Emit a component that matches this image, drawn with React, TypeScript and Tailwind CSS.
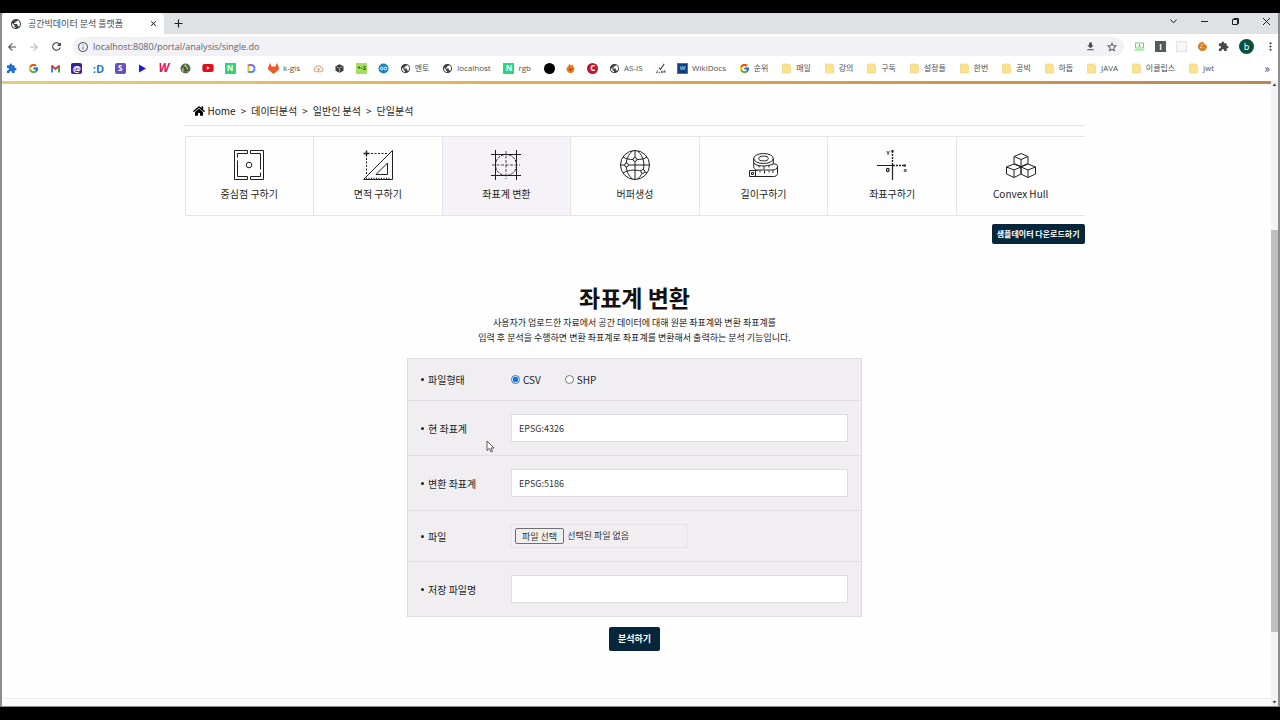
import { useRef, useState } from "react";
import type { ReactNode } from "react";
import { clsx } from "clsx";
import { FcGoogle } from "react-icons/fc";
import { SiGitlab } from "react-icons/si";
import { FaHome, FaYoutube } from "react-icons/fa";
import {
  MdArrowBack,
  MdArrowForward,
  MdClose,
  MdCookie,
  MdExtension,
  MdFileDownload,
  MdInfoOutline,
  MdMoreVert,
  MdPublic,
  MdRefresh,
  MdStarBorder,
} from "react-icons/md";

/* ---------- bookmark icons ---------- */

function Tile({ className, children }: { className: string; children?: ReactNode }) {
  return (
    <span className={clsx("flex size-[11px] items-center justify-center leading-none font-bold", className)}>
      {children}
    </span>
  );
}

function Folder() {
  return (
    <svg viewBox="0 0 11 11" className="size-[11px]">
      <path d="M1.500 1h7v1.500h1V10h-8z" fill="#fbe38e" stroke="#ead07a" strokeWidth="0.600" />
    </svg>
  );
}

function GmailMark() {
  return (
    <svg viewBox="0 0 11 11" className="size-[11px]" fill="none" strokeWidth="2">
      <path d="M2 9.500V3" stroke="#4285f4" />
      <path d="M9 9.500V3" stroke="#34a853" />
      <path d="M1.500 2.500l4 3.500 4-3.500" stroke="#d93a2f" />
    </svg>
  );
}

function PlayMark() {
  return (
    <svg viewBox="0 0 11 11" className="size-[11px]">
      <path d="M2 1.500 9 5.500 2 9.500z" fill="#1d1ad1" />
    </svg>
  );
}

function LeafGlobe() {
  return (
    <svg viewBox="0 0 12 12" className="size-[11px]">
      <circle cx="6" cy="6" r="5.500" fill="#5b6a55" />
      <path d="M3 9.500C3 5 5 3 6 2.500c1 2 2 4 3 7" fill="none" stroke="#a8cf6b" strokeWidth="1.400" />
      <path d="M2 4.500c2-1 3 0 4 2s2 2 4 1" fill="none" stroke="#384636" strokeWidth="1.200" />
    </svg>
  );
}

function DMark() {
  return (
    <svg viewBox="0 0 11 11" className="size-[11px]" fill="none" strokeWidth="2">
      <path d="M2.500 1v9" stroke="#f2b632" />
      <path d="M2.500 2H5q3.500 0 3.500 3.500" stroke="#7b6cf0" />
      <path d="M8.500 5.500Q8.500 9 5 9H2.500" stroke="#4a8df0" />
    </svg>
  );
}

function CloudMark() {
  return (
    <svg viewBox="0 0 12 12" className="size-[11px]" fill="none" stroke="#e0a27c" strokeWidth="1.100">
      <path d="M3 9.500a2.300 2.300 0 0 1 0-4.500 3.200 3.200 0 0 1 6 0 2.300 2.300 0 0 1 0 4.500z" />
      <path d="M6 9V6M4.700 7.200 6 6l1.300 1.200" />
    </svg>
  );
}

function CubeMark() {
  return (
    <svg viewBox="0 0 11 11" className="size-[11px]">
      <path d="M5.500 1.200 9.500 3.200v4.600l-4 2-4-2V3.200z" fill="#3d3d3d" />
      <path d="M2.500 3.800 5.500 5.200l3-1.400M5.500 5.200v3.600" stroke="#b5b5b5" strokeWidth="0.800" fill="none" />
    </svg>
  );
}

function LinkMark() {
  return (
    <svg viewBox="0 0 12 12" className="size-[11px]">
      <circle cx="6" cy="6" r="5.500" fill="#1b84b8" />
      <circle cx="4" cy="6" r="1.500" fill="none" stroke="#fff" />
      <circle cx="8" cy="6" r="1.500" fill="none" stroke="#fff" />
    </svg>
  );
}

function FlameMark() {
  return (
    <svg viewBox="0 0 11 11" className="size-[11px]">
      <path d="M1.500 5 3.500 3 4 .800 6 2.500 8 1.500v2l1.500 1.500c0 3-1.500 5-4 5s-4-2-4-5z" fill="#e8761d" />
      <circle cx="5.500" cy="6.500" r="1.300" fill="#a84a10" />
    </svg>
  );
}

function JsonMark() {
  return (
    <svg viewBox="0 0 12 12" className="size-[11px]" fill="none" stroke="#444">
      <path d="M4.500 5 6 7l4-6" strokeWidth="1.200" />
      <path d="M1 10.500h1.500V8M4 10.500h1.500M7 8.500v2h1.500v-2M10 10.500v-2h1v2" strokeWidth="0.900" />
    </svg>
  );
}

interface Bookmark {
  name: string;
  icon: ReactNode;
  text?: string;
}

const globe = <MdPublic className="size-[11px] text-[#3f4347]" />;
const google = <FcGoogle className="size-[11px]" />;

const bookmarks: Bookmark[] = [
  { name: "extensions", icon: <MdExtension className="size-[11px] text-[#1f6fd1]" /> },
  { name: "google", icon: google },
  { name: "gmail", icon: <GmailMark /> },
  { name: "mail", icon: <Tile className="rounded-xs bg-[#32229c] text-[9px] text-white">@</Tile> },
  { name: "d", icon: <Tile className="text-[11px] text-[#2376cf]">:D</Tile> },
  { name: "s", icon: <Tile className="rounded-xs bg-[#6a51b5] text-[8px] text-white">S</Tile> },
  { name: "play", icon: <PlayMark /> },
  { name: "w", icon: <Tile className="text-[12px] text-[#dd1462] italic">W</Tile> },
  { name: "leaf", icon: <LeafGlobe /> },
  { name: "youtube", icon: <FaYoutube className="size-[12px] text-[#e00d1c]" /> },
  { name: "n", icon: <Tile className="bg-[#2bd67b] text-[8px] text-white">N</Tile> },
  { name: "docs", icon: <DMark /> },
  { name: "k-gis", icon: <SiGitlab className="size-[11px] text-[#ea5a2a]" />, text: "k-gis" },
  { name: "cloud", icon: <CloudMark /> },
  { name: "cube", icon: <CubeMark /> },
  { name: "js", icon: <Tile className="bg-[#a3e05f] text-[6px] text-[#2d5a1c]">*-S</Tile> },
  { name: "link", icon: <LinkMark /> },
  { name: "mentor", icon: globe, text: "멘토" },
  { name: "localhost", icon: globe, text: "localhost" },
  { name: "rgb", icon: <Tile className="bg-[#2bd67b] text-[8px] text-white">N</Tile>, text: "rgb" },
  { name: "dot", icon: <Tile className="rounded-full bg-black" /> },
  { name: "flame", icon: <FlameMark /> },
  { name: "c", icon: <Tile className="rounded-full bg-[#c4142d] text-[8px] text-white">C</Tile> },
  { name: "as-is", icon: globe, text: "AS-IS" },
  { name: "json", icon: <JsonMark /> },
  {
    name: "wikidocs",
    icon: <Tile className="border border-[#2a7ac4] bg-[#123f78] text-[6px] text-[#8fc4f2]">W</Tile>,
    text: "WikiDocs",
  },
  { name: "rank", icon: google, text: "순위" },
  { name: "daily", icon: <Folder />, text: "매일" },
  { name: "lecture", icon: <Folder />, text: "강의" },
  { name: "subscribe", icon: <Folder />, text: "구독" },
  { name: "settings", icon: <Folder />, text: "설정들" },
  { name: "once", icon: <Folder />, text: "한번" },
  { name: "gongbig", icon: <Folder />, text: "공빅" },
  { name: "hadoop", icon: <Folder />, text: "하둡" },
  { name: "java", icon: <Folder />, text: "JAVA" },
  { name: "eclipse", icon: <Folder />, text: "이클립스" },
  { name: "jwt", icon: <Folder />, text: "jwt" },
];

/* ---------- analysis icons ---------- */

function CenterIcon() {
  return (
    <>
      <path d="M13.500 0.500v3h-10v4M13.500 0.500h-13v29h13v-3h-10v-16" />
      <path d="M16.500 3.500v-3h13v29h-13v-3h10v-4M16.500 3.500h10v16" />
      <circle cx="15" cy="15" r="2.800" />
    </>
  );
}

function AreaIcon() {
  return (
    <>
      <path d="M29.500 0.500v29h-29z" />
      <path d="M24.500 13v11.500H13z" />
      <path d="M0.500 3.500h6M3.500 0.500v6" strokeWidth="1.400" />
      <path d="M8 3.500h17M3.500 8v17" strokeDasharray="2 1.500" />
      <path d="M3 28.500h25" strokeDasharray="1 1.500" strokeWidth="1.500" />
    </>
  );
}

function TransformIcon() {
  return (
    <>
      <path d="M4.500 0v30M25.500 0v30M0 4.500h30M0 25.500h30" />
      <circle cx="15" cy="15" r="10.500" strokeDasharray="3 1" />
      <path d="M15 1v28M1 15h28" strokeDasharray="3 1.500" strokeWidth="0.800" />
    </>
  );
}

function BufferIcon() {
  return (
    <>
      <circle cx="15" cy="15" r="14.500" />
      <path d="M15 0.500v7M15 11.500v18M0.500 15H4.500M8.500 15h21" />
      <path d="M12.500 0.800C4 8 4 22 12.500 29.200M17.500 0.800C26 8 26 22 17.500 29.200" />
      <path d="M3 7c3 2 6.500 2.500 10 2.500M17 9.500c4 0 7-.5 10-2.500M3 23c7-4 13-3 18.500-2M25 22l2 1" />
      <g fill="#fff">
        <circle cx="15" cy="9.500" r="1.900" />
        <circle cx="6.500" cy="15" r="1.900" />
        <circle cx="22.800" cy="21.500" r="1.900" />
      </g>
    </>
  );
}

function LengthIcon() {
  return (
    <>
      <ellipse cx="14.500" cy="8.500" rx="9.800" ry="5" />
      <ellipse cx="14.500" cy="8.500" rx="4.800" ry="2.400" />
      <path d="M4.700 8.500v8c0 1.500 1 3 3 3.500h15c3 0 5.800-1 5.800-3.500 0-2-2-3-4.200-2.500V8.500" />
      <path d="M4.700 13c3 3.500 12 4 19.600 1M28.500 16.500v7c0 2-2 3-4 3h-24v-6h8" />
      <path d="M10 15.500v2M15 16v3M20 15.500v2M11 20.500v2M15.500 20.500v3M20 20.500v2M24 20v3M6.500 20.500v6M2.500 22.500h2v2h-2z" />
    </>
  );
}

function PointIcon() {
  return (
    <>
      <path d="M0 15.500h15M15.500 15v15" strokeWidth="1.200" />
      <path d="M15.500 1v14M16 15.500h12" strokeDasharray="2 1" strokeWidth="1.400" />
      <path d="M14.500 1h2M28 14.500v2" strokeWidth="2" />
      <g fill="#111" stroke="none" fontSize="6" fontWeight="700" fontFamily="Liberation Sans, sans-serif">
        <text x="9" y="4.500">Y</text>
        <text x="26.500" y="22">x</text>
      </g>
      <ellipse cx="10.800" cy="20" rx="1.300" ry="1.600" strokeWidth="1.200" />
    </>
  );
}

function HullIcon() {
  return (
    <>
      <path d="M15 3.500 22 6.500v7l-7 3-7-3v-7zM8 6.500l7 3 7-3M15 9.500v7" />
      <path d="M8 14 15 17v7l-7 3.500L0.500 24v-7zM0.500 17 8 20l7-3M8 20v7.500" />
      <path d="M22 14l7.500 3v7L22 27.500 15 24v-7zM15 17l7 3 7.500-3M22 20v7.500" />
    </>
  );
}

const tools = [
  { label: "중심점 구하기", Icon: CenterIcon },
  { label: "면적 구하기", Icon: AreaIcon },
  { label: "좌표계 변환", Icon: TransformIcon, active: true },
  { label: "버퍼생성", Icon: BufferIcon },
  { label: "길이구하기", Icon: LengthIcon },
  { label: "좌표구하기", Icon: PointIcon },
  { label: "Convex Hull", Icon: HullIcon },
];

/* ---------- browser chrome ---------- */

function TabStrip() {
  return (
    <div className="flex h-[21px] items-stretch bg-[#dfe1e5]">
      <div className="flex w-[162px] items-center rounded-t bg-white pr-1.5 pl-2">
        <MdPublic className="size-3 shrink-0 text-[#3f4347]" />
        <span className="ml-1.5 flex-1 text-[9px] whitespace-nowrap text-[#45494d]">공간빅데이터 분석 플랫폼</span>
        <button type="button" aria-label="탭 닫기">
          <MdClose className="size-[9px] text-[#202124]" />
        </button>
      </div>
      <button type="button" aria-label="새 탭" className="ml-2.5">
        <svg viewBox="0 0 9 9" className="size-[9px]" stroke="#202124" strokeWidth="1.200">
          <path d="M4.500 0.500v8M0.500 4.500h8" />
        </svg>
      </button>
      <div className="ml-auto flex items-center gap-[22px] pr-[7px] pb-1 text-[#202124]">
        <button type="button" aria-label="탭 검색">
          <svg viewBox="0 0 9 9" className="size-[9px]" fill="none" stroke="currentColor">
            <path d="M1.500 2.500 4.500 6l3-3.500" />
          </svg>
        </button>
        <button type="button" aria-label="최소화">
          <svg viewBox="0 0 9 9" className="size-[9px]" stroke="currentColor">
            <path d="M1 4.500h7" />
          </svg>
        </button>
        <button type="button" aria-label="이전 크기로">
          <svg viewBox="0 0 9 9" className="size-[9px]" fill="none" stroke="currentColor">
            <path d="M1.500 2.500h5v5h-5zM3 2.500v-1h4.500v5h-1" />
          </svg>
        </button>
        <button type="button" aria-label="닫기">
          <svg viewBox="0 0 9 9" className="size-[9px]" stroke="currentColor">
            <path d="M1 1l7 7M8 1 1 8" />
          </svg>
        </button>
      </div>
    </div>
  );
}

function Toolbar() {
  return (
    <div className="flex h-[25px] items-center bg-white pr-px pl-1">
      <div className="flex gap-2.5">
        <button type="button" aria-label="뒤로">
          <MdArrowBack className="size-3 text-[#45494d]" />
        </button>
        <button type="button" aria-label="앞으로">
          <MdArrowForward className="size-3 text-[#b6b9bd]" />
        </button>
        <button type="button" aria-label="새로고침">
          <MdRefresh className="size-[13px] text-[#35383b]" />
        </button>
      </div>
      <div className="ml-2.5 flex h-[19px] flex-1 items-center rounded-full bg-[#f1f1f6] pr-1.5 pl-1">
        <MdInfoOutline className="size-3 shrink-0 text-[#5f6368]" />
        <input
          aria-label="주소"
          defaultValue="localhost:8080/portal/analysis/single.do"
          className="ml-1 flex-1 bg-transparent font-['Open_Sans','Noto_Sans_CJK_KR',sans-serif] text-[9px] text-[#5f6368] outline-none"
        />
        <MdFileDownload className="mr-2.5 size-[11px] text-[#45494d]" />
        <MdStarBorder className="size-3 text-[#45494d]" />
      </div>
      <div className="ml-2.5 flex items-center gap-2.5">
        <svg viewBox="0 0 11 11" className="size-[11px]" fill="none" stroke="#6bd66b">
          <path d="M1.500 2h8v5h-8zM0.500 9h10M5.500 3v2.500M4 4.500l1.500 1.500L7 4.500" />
        </svg>
        <Tile className="bg-[#58595b] text-[8px] text-white">I</Tile>
        <Tile className="border border-[#e6e3e6] bg-[#f8f6f8]" />
        <MdCookie className="size-[11px] text-[#d08328]" />
        <MdExtension className="size-[11px] text-[#45494d]" />
        <span className="flex size-[15px] items-center justify-center rounded-full bg-[#05503c] text-[9px] text-white">b</span>
        <MdMoreVert className="size-[13px] text-[#45494d]" />
      </div>
    </div>
  );
}

function BookmarkBar() {
  return (
    <nav aria-label="북마크" className="flex h-[21px] items-center bg-white pr-2 pb-[3px] pl-1">
      <div className="mr-12 flex flex-1 items-center justify-between">
        {bookmarks.map(({ name, icon, text }) => (
          <a
            key={name}
            href="#"
            aria-label={name}
            className={clsx(
              "flex items-center gap-1 font-['Open_Sans','Noto_Sans_CJK_KR',sans-serif] text-[8px] whitespace-nowrap text-[#4a4d51]",
              text && "pr-0.5",
            )}
          >
            {icon}
            {text && <span>{text}</span>}
          </a>
        ))}
      </div>
      <span className="text-[12px] leading-none text-[#45494d]">»</span>
    </nav>
  );
}

function Scrollbar() {
  return (
    <div className="flex w-[7px] flex-col items-center bg-[#f3f2f4]">
      <svg viewBox="0 0 7 8" className="h-2 w-[7px]">
        <path d="M1.500 6h4l-2-2.500z" fill="#444" />
      </svg>
      <div className="flex-[142]" />
      <div className="w-full flex-[401] bg-[#bfbfc1]" />
      <div className="flex-[66]" />
      <svg viewBox="0 0 7 8" className="h-2 w-[7px]">
        <path d="M1.500 3h4l-2 2.500z" fill="#444" />
      </svg>
    </div>
  );
}

/* ---------- page ---------- */

function Breadcrumb() {
  const parts = ["데이터분석", "일반인 분석", "단일분석"];
  return (
    <nav className="flex h-[42px] items-center border-b border-[#e2e2e4] pt-3 pl-2 text-[10px] text-[#1c1c1c]">
      <a href="#" className="flex items-center gap-[3px]">
        <FaHome className="size-3 text-black" />
        Home
      </a>
      {parts.map((part) => (
        <span key={part} className="flex">
          <span className="px-[5px]">&gt;</span>
          <a href="#">{part}</a>
        </span>
      ))}
    </nav>
  );
}

function ToolTabs() {
  return (
    <div className="mt-2.5 grid grid-cols-7 border-y border-[#e4e3e6]">
      {tools.map(({ label, Icon, active }) => (
        <a
          key={label}
          href="#"
          className={clsx(
            "flex h-[78px] flex-col items-center gap-[5px] border-l border-[#e4e3e6] pt-3 text-[10px] text-[#1c1c1c]",
            active && "bg-[#f5f3f8]",
          )}
        >
          <svg viewBox="-1 -1 32 32" className="size-8" fill="none" stroke="#1f1f1f">
            <Icon />
          </svg>
          {label}
        </a>
      ))}
    </div>
  );
}

interface RowProps {
  label: string;
  htmlFor?: string;
  children: ReactNode;
}

function FormRow({ label, htmlFor, children }: RowProps) {
  return (
    <div className="flex items-center border-t border-[#e0dee2] px-[13px] py-[13px] first:border-t-0">
      <label htmlFor={htmlFor} className="flex w-[90px] shrink-0 items-center gap-1">
        <span className="size-[3px] rounded-full bg-[#222]" />
        {label}
      </label>
      {children}
    </div>
  );
}

const inputClass =
  "h-7 min-w-0 flex-1 border border-[#dfdde2] bg-white px-[7px] text-[9px] text-[#333] outline-none";

function TransformForm() {
  const [fileType, setFileType] = useState("CSV");
  const fileRef = useRef<HTMLInputElement>(null);

  return (
    <form
      className="mx-auto mt-[13px] flex w-full max-w-[455px] flex-col items-center"
      onSubmit={(e) => e.preventDefault()}
    >
      <div className="w-full border border-[#dddbe0] bg-[#f0eef1] text-[10px] text-[#1c1c1c]">
        <FormRow label="파일형태">
          <div className="flex gap-6">
            {["CSV", "SHP"].map((type) => (
              <label key={type} className="flex items-center gap-[3px]">
                <input
                  type="radio"
                  name="fileType"
                  value={type}
                  checked={fileType === type}
                  onChange={() => setFileType(type)}
                  className="size-[9px] accent-[#1a73d9]"
                />
                {type}
              </label>
            ))}
          </div>
        </FormRow>
        <FormRow label="현 좌표계" htmlFor="source">
          <input id="source" type="text" defaultValue="EPSG:4326" className={inputClass} />
        </FormRow>
        <FormRow label="변환 좌표계" htmlFor="target">
          <input id="target" type="text" defaultValue="EPSG:5186" className={inputClass} />
        </FormRow>
        <FormRow label="파일" htmlFor="file">
          <div className="flex h-6 w-[177px] items-center gap-[3px] border border-[#e6e4e8] px-[3px] text-[9px] text-[#333]">
            <input ref={fileRef} id="file" type="file" className="hidden" />
            <button
              type="button"
              onClick={() => fileRef.current?.click()}
              className="h-4 rounded-xs border border-[#6f6f72] bg-[#efefef] px-[6px] leading-none"
            >
              파일 선택
            </button>
            선택된 파일 없음
          </div>
        </FormRow>
        <FormRow label="저장 파일명" htmlFor="output">
          <input id="output" type="text" className={inputClass} />
        </FormRow>
      </div>
      <button type="submit" className="mt-2.5 h-6 rounded-xs bg-[#06263c] px-[9px] text-[9px] font-bold text-white">
        분석하기
      </button>
    </form>
  );
}

export default function App() {
  return (
    <div className="flex min-h-screen flex-col bg-black py-[13px] font-['Noto_Sans_CJK_KR',sans-serif]">
      <div className="flex flex-1 flex-col border-x-2 border-b border-[#8d8c90] bg-white">
        <TabStrip />
        <Toolbar />
        <BookmarkBar />
        <div className="flex flex-1">
          <main className="relative flex min-w-0 flex-1 flex-col bg-[#fefefe]">
            <div className="mt-px h-[3px] bg-linear-to-r from-[#e3cf78] via-[#dba950] to-[#bf8550]" />
            <div className="flex-1 pr-1">
              <div className="mx-auto w-full max-w-[900px]">
                <Breadcrumb />
                <ToolTabs />
                <div className="mt-2 flex justify-end">
                  <button type="button" className="h-5 rounded-xs bg-[#06263c] px-[5px] text-[8px] font-bold text-white">
                    샘플데이터 다운로드하기
                  </button>
                </div>
                <h1 className="mt-[38px] text-center text-[23px] leading-[30px] font-bold text-[#111]">좌표계 변환</h1>
                <p className="mt-[3px] text-center text-[9px] leading-[15px] text-[#222]">
                  사용자가 업로드한 자료에서 공간 데이터에 대해 원본 좌표계와 변환 좌표계를
                  <br />
                  입력 후 분석을 수행하면 변환 좌표계로 좌표계를 변환해서 출력하는 분석 기능입니다.
                </p>
                <TransformForm />
              </div>
            </div>
            <div className="h-2 border-t border-[#ececee]" />
            {/* mouse pointer */}
            <svg viewBox="0 0 9 13" className="absolute top-[360px] left-[484px] h-[13px] w-[9px]">
              <path d="M1 1v9.500l2.300-2 1.700 3.500 1.500-.7L5 8h3z" fill="#fff" stroke="#333" strokeWidth="0.800" />
            </svg>
          </main>
          <Scrollbar />
        </div>
      </div>
    </div>
  );
}
